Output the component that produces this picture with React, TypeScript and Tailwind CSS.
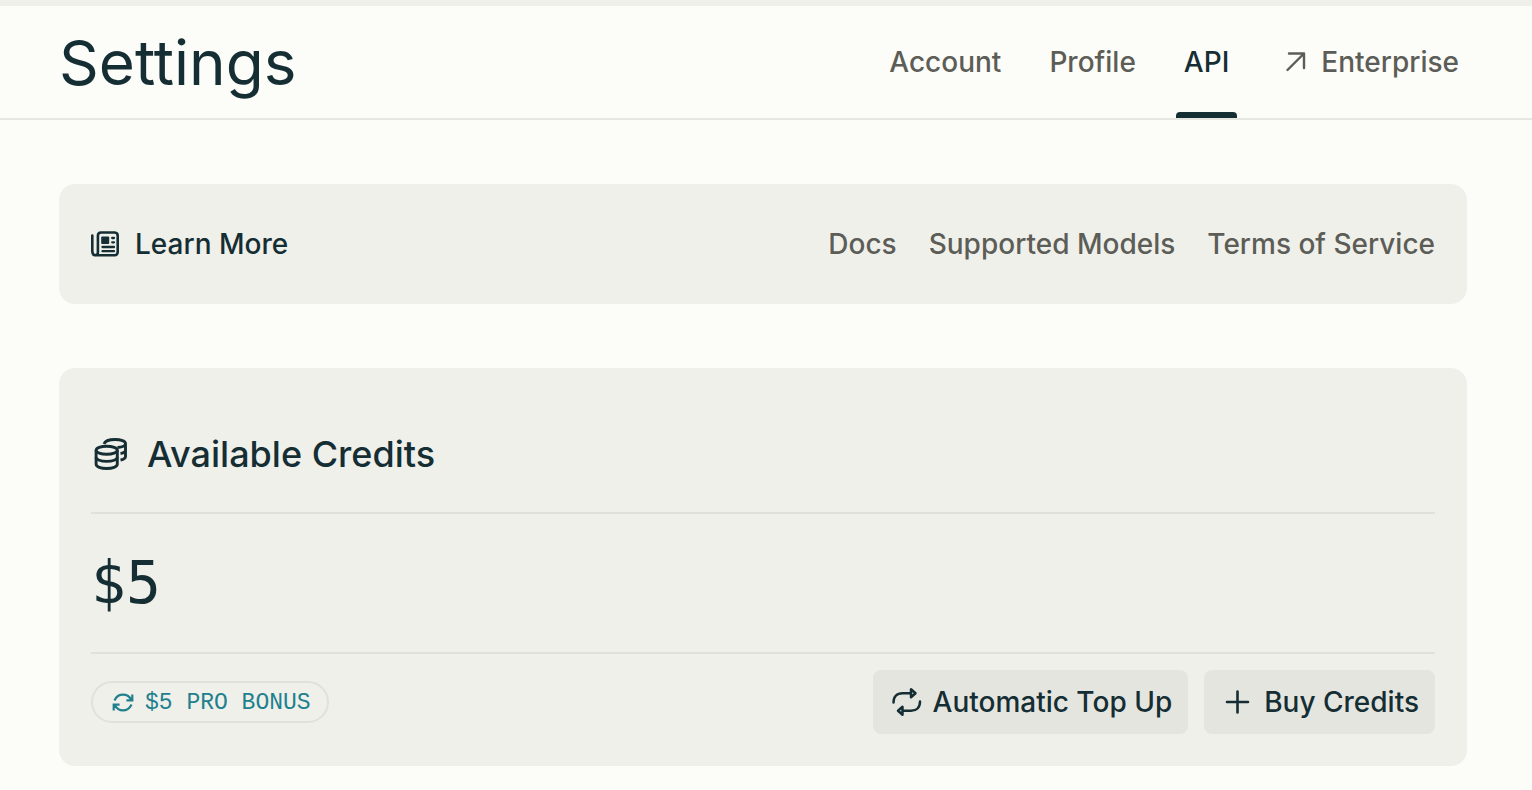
import type { ReactNode } from "react";

type NavItem = {
  label: string;
  href: string;
  active?: boolean;
  external?: boolean;
};

const NAV: NavItem[] = [
  { label: "Account", href: "#account" },
  { label: "Profile", href: "#profile" },
  { label: "API", href: "#api", active: true },
  { label: "Enterprise", href: "#enterprise", external: true },
];

const LINKS = [
  { label: "Docs", href: "#docs" },
  { label: "Supported Models", href: "#models" },
  { label: "Terms of Service", href: "#terms" },
];

function App() {
  return (
    <div className="min-h-screen border-t-6 border-[#f0f0eb] bg-[#fcfcf8] pb-6 font-['Inter','Liberation_Sans',sans-serif] text-[28px] leading-10 font-medium text-[#152e34]">
      <Header />
      <main className="flex flex-col gap-16 pt-16 pr-[65px] pl-[59px]">
        <LearnMore />
        <Credits />
      </main>
    </div>
  );
}

const Header = () => {
  return (
    <header className="flex items-stretch justify-between border-b-2 border-[#e6e7e1] pr-[65px] pl-[59px]">
      <h1 className="pt-[21px] pb-[19px] text-[62px] leading-[72px] font-normal">
        Settings
      </h1>
      <nav className="flex gap-8">
        {NAV.map((item) => (
          <a
            key={item.label}
            href={item.href}
            className={
              item.active
                ? "relative flex items-center px-2"
                : "flex items-center gap-3 px-2 text-[#5c5d57]"
            }
          >
            {item.external && <ArrowIcon />}
            {item.label}
            {item.active && (
              <span className="absolute inset-x-0 bottom-0 h-1.5 rounded-t-sm bg-[#152e34]" />
            )}
          </a>
        ))}
      </nav>
    </header>
  );
};

const LearnMore = () => {
  return (
    <section className="flex items-center justify-between rounded-2xl bg-[#f0f0eb] px-8 py-10">
      <h2 className="flex items-center gap-4">
        <NewsIcon />
        Learn More
      </h2>
      <div className="flex gap-8 text-[#5c5d57]">
        {LINKS.map((link) => (
          <a key={link.label} href={link.href}>
            {link.label}
          </a>
        ))}
      </div>
    </section>
  );
};

const Credits = () => {
  return (
    <section className="rounded-2xl bg-[#f0f0eb] px-8 pt-[62px] pb-8">
      <h2 className="flex items-center gap-4 border-b-2 border-[#e0e1db] pb-[34px] text-[36px] leading-12">
        <CoinsIcon />
        Available Credits
      </h2>
      <p className="border-b-2 border-[#e0e1db] py-8 font-['DejaVu_Sans_Mono',monospace] text-[58px] leading-[74px] font-normal">
        $5
      </p>
      <div className="flex items-center justify-between pt-4">
        <span className="flex items-center gap-2.5 rounded-full border-2 border-[#e0e1db] pt-[5px] pr-4 pb-[3px] pl-[18px] font-['Liberation_Mono',monospace] text-[23px] leading-[30px] font-normal text-[#20808d]">
          <RefreshIcon />
          $5 PRO BONUS
        </span>
        <div className="flex gap-4">
          <Button icon={<RepeatIcon />}>Automatic Top Up</Button>
          <Button icon={<PlusIcon />}>Buy Credits</Button>
        </div>
      </div>
    </section>
  );
};

const Button = ({ icon, children }: { icon: ReactNode; children: ReactNode }) => {
  return (
    <button
      type="button"
      className="flex cursor-pointer items-center gap-2 rounded-lg bg-[#e5e5e0] px-4 py-3"
    >
      {icon}
      {children}
    </button>
  );
};

const ArrowIcon = () => (
  <svg className="h-7 w-8" viewBox="-4 0 32 28" fill="none" stroke="currentColor" strokeWidth="2.4" strokeLinecap="round" strokeLinejoin="round">
    <path d="M6.500 22 22.500 6M8 5.500H23V20" />
  </svg>
);

const NewsIcon = () => (
  <svg className="size-7" viewBox="0 0 28 28" fill="none" stroke="currentColor" strokeWidth="2.600" strokeLinecap="round">
    <path d="M1.300 5.500V21.500Q1.300 25.300 5 25.300H23.700A3.200 3.200 0 0 0 26.700 22V5.700A3.200 3.200 0 0 0 23.700 2.500H10A3.200 3.200 0 0 0 6.900 5.700V22.500Q6.900 25 4.500 25.300" />
    <path d="M11.500 17H23M11.500 21.200H23M21.200 8H23M21.200 12.300H23" strokeWidth="2.300" />
    <rect x="10.200" y="6.500" width="8" height="7.500" rx="1" fill="currentColor" stroke="none" />
  </svg>
);

const CoinsIcon = () => (
  <svg className="size-10" viewBox="0 0 40 40" fill="none" stroke="currentColor" strokeWidth="2.900">
    <ellipse cx="15.700" cy="16.300" rx="10.600" ry="4" />
    <path d="M5.100 16.300V30.300C5.100 32.700 9.900 34.500 15.700 34.500S26.300 32.700 26.300 30.300V16.300" />
    <path d="M5.100 23.300C5.100 25.700 9.900 27.400 15.700 27.400S26.300 25.700 26.300 23.300" />
    <path d="M13 10C14 7.200 18.500 5.500 24 5.500C30 5.500 34.500 7.200 34.500 9.500V22.500C34.500 24.300 33 25.300 29.500 26M34.500 9.500C34.500 11.800 31 13.200 26.500 13.500M34.500 16C34.500 17.800 33 19 29.500 19.500" />
  </svg>
);

const RefreshIcon = () => (
  <svg className="size-6" viewBox="0 0 24 24" fill="none" stroke="currentColor" strokeWidth="2.200" strokeLinecap="square">
    <path d="M4 8.500A9 9 0 0 1 20 8.500M21.300 4.500V9.300H16.500M20 14.500A9 9 0 0 1 4 14.500M2.700 18.500V13.700H7.500" />
  </svg>
);

const RepeatIcon = () => (
  <svg className="h-8 w-9" viewBox="0 0 36 32" fill="none" stroke="currentColor" strokeWidth="2.500" strokeLinecap="round" strokeLinejoin="round">
    <path d="M4.500 16.500C4.500 10.500 8 7.200 13.500 7.200H21.500M22 3.300V11.200L26.500 7.200ZM31 15.500C31 21.500 27.500 24.800 22 24.800H14M13.500 20.800V28.700L9 24.800Z" />
  </svg>
);

const PlusIcon = () => (
  <svg className="h-8 w-9" viewBox="0 0 36 32" fill="none" stroke="currentColor" strokeWidth="2.600" strokeLinecap="round">
    <path d="M17.500 5.500V26.500M7 16H28" />
  </svg>
);

export default App;
